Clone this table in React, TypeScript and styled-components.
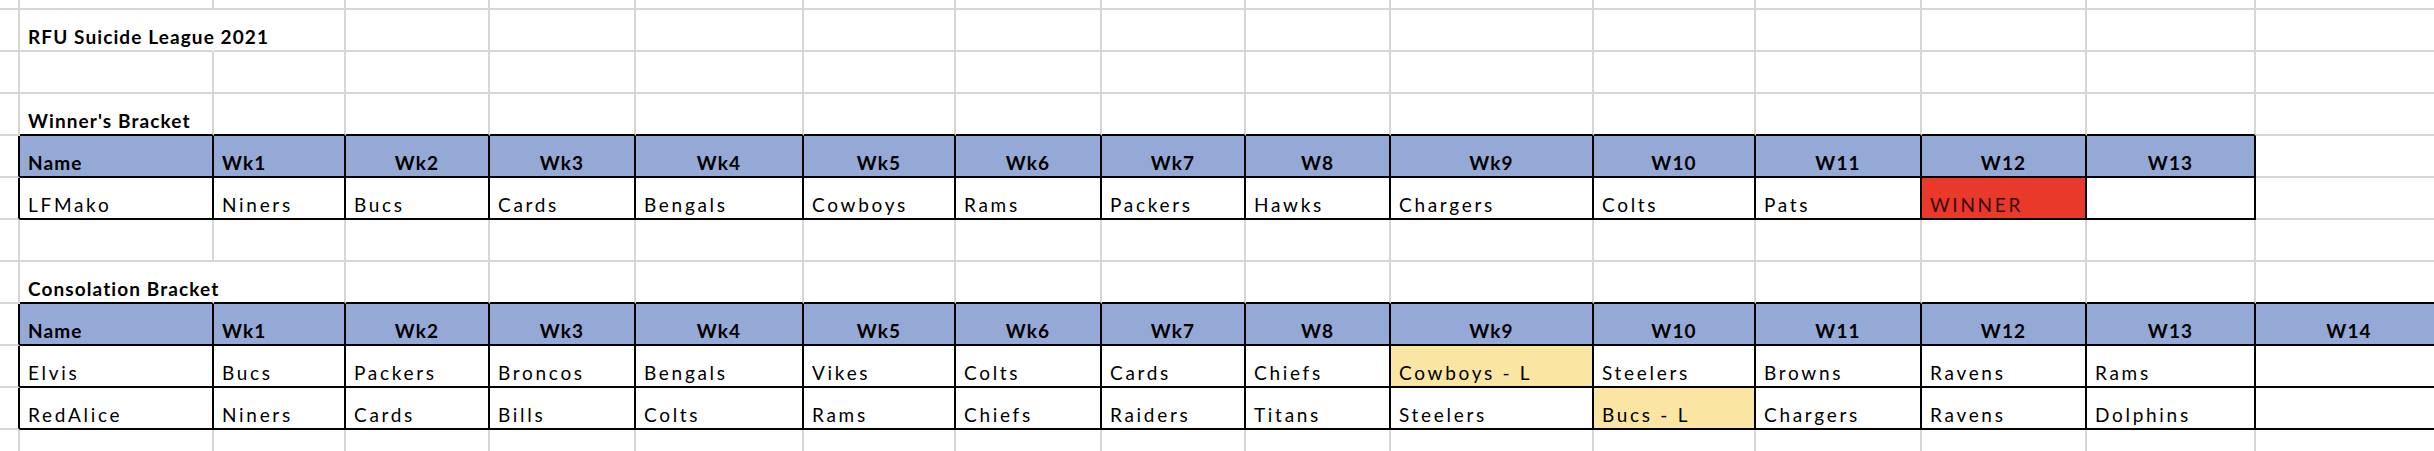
import React from "react";
import styled, { createGlobalStyle, css } from "styled-components";

const GRID_LINE = "#d6d6d6";
const INK_LINE = "#000000";
const HEAD_FILL = "#95a9d6";
const RED_FILL = "#e8392b";
const GOLD_FILL = "#fae5a3";

const COLS = [20, 194, 132, 144, 146, 168, 152, 146, 144, 145, 203, 162, 166, 165, 169, 188];
const ROWS = [10, 42, 42, 42, 42, 42, 42, 42, 42, 42, 42, 42];

type Fill = "head" | "red" | "gold" | "none";
type Align = "left" | "center";

interface CellSpec {
  text?: string;
  bold?: boolean;
  align?: Align;
  fill?: Fill;
  spill?: boolean;
  winner?: boolean;
}

const HEADERS = ["Name", "Wk1", "Wk2", "Wk3", "Wk4", "Wk5", "Wk6", "Wk7", "W8", "Wk9", "W10", "W11", "W12", "W13", "W14"];

const WINNERS: string[][] = [
  ["LFMako", "Niners", "Bucs", "Cards", "Bengals", "Cowboys", "Rams", "Packers", "Hawks", "Chargers", "Colts", "Pats", "WINNER", ""],
];

const CONSOLATION: string[][] = [
  ["Elvis", "Bucs", "Packers", "Broncos", "Bengals", "Vikes", "Colts", "Cards", "Chiefs", "Cowboys - L", "Steelers", "Browns", "Ravens", "Rams", ""],
  ["RedAlice", "Niners", "Cards", "Bills", "Colts", "Rams", "Chiefs", "Raiders", "Titans", "Steelers", "Bucs - L", "Chargers", "Ravens", "Dolphins", ""],
];

interface TableBlock {
  top: number; // header row index
  cols: number; // number of columns including Name
  rows: string[][];
}

const TABLES: TableBlock[] = [
  { top: 4, cols: 14, rows: WINNERS },
  { top: 8, cols: 15, rows: CONSOLATION },
];

const LOST = /- L$/;

function buildSheet(): CellSpec[][] {
  const sheet: CellSpec[][] = ROWS.map(() => COLS.map(() => ({})));
  sheet[1][1] = { text: "RFU Suicide League 2021", bold: true, spill: true };
  sheet[3][1] = { text: "Winner's Bracket", bold: true };
  sheet[7][1] = { text: "Consolation Bracket", bold: true, spill: true };

  TABLES.forEach((t) => {
    for (let c = 0; c < t.cols; c++) {
      sheet[t.top][c + 1] = {
        text: HEADERS[c],
        bold: true,
        align: c < 2 ? "left" : "center",
        fill: "head",
      };
    }
    t.rows.forEach((row, ri) => {
      for (let c = 0; c < t.cols; c++) {
        const text = row[c] ?? "";
        const winner = text === "WINNER";
        sheet[t.top + 1 + ri][c + 1] = {
          text,
          fill: winner ? "red" : LOST.test(text) ? "gold" : "none",
          winner,
        };
      }
    });
  });
  return sheet;
}

function inTable(r: number, c: number): boolean {
  return TABLES.some((t) => r >= t.top && r <= t.top + t.rows.length && c >= 1 && c <= t.cols);
}

const GlobalStyle = createGlobalStyle`
  html, body {
    margin: 0;
    padding: 0;
    background: #ffffff;
    overflow: hidden;
  }
  #root {
    width: 2434px;
    overflow: hidden;
  }
`;

const Sheet = styled.div`
  display: grid;
  grid-template-columns: ${COLS.map((w) => `${w}px`).join(" ")};
  grid-template-rows: ${ROWS.map((h) => `${h}px`).join(" ")};
  width: ${COLS.reduce((a, b) => a + b, 0)}px;
  font-family: Lato, "Open Sans", "Liberation Sans", sans-serif;
  color: #000;
`;

const fills: Record<Fill, string> = {
  head: HEAD_FILL,
  red: RED_FILL,
  gold: GOLD_FILL,
  none: "transparent",
};

const Cell = styled.div<{
  $right: "grid" | "ink" | "none";
  $bottom: "grid" | "ink";
  $fill: Fill;
  $bold: boolean;
  $align: Align;
  $winner: boolean;
}>`
  box-sizing: border-box;
  display: flex;
  align-items: flex-end;
  justify-content: ${(p) => (p.$align === "center" ? "center" : "flex-start")};
  min-width: 0;
  padding: 0 4px 2px 8px;
  white-space: nowrap;
  overflow: visible;
  background: ${(p) => fills[p.$fill]};
  border-right: 2px solid
    ${(p) => (p.$right === "ink" ? INK_LINE : p.$right === "grid" ? GRID_LINE : "transparent")};
  border-bottom: 2px solid ${(p) => (p.$bottom === "ink" ? INK_LINE : GRID_LINE)};
  font-size: 19px;
  line-height: 22px;
  ${(p) =>
    p.$bold
      ? css`
          font-weight: 700;
          letter-spacing: 1.1px;
        `
      : css`
          font-weight: 400;
          letter-spacing: 2.7px;
        `}
  ${(p) =>
    p.$align === "center" &&
    css`
      padding-left: 4px;
    `}
  ${(p) =>
    p.$winner &&
    css`
      color: #3b0906;
    `}
`;

const Label = styled.span`
  position: relative;
  z-index: 1;
`;

export default function App() {
  const sheet = buildSheet();
  return (
    <>
      <GlobalStyle />
      <Sheet>
        {sheet.map((row, r) =>
          row.map((cell, c) => {
            const right = cell.spill
              ? "none"
              : inTable(r, c) || inTable(r, c + 1)
              ? "ink"
              : "grid";
            const bottom = inTable(r, c) || inTable(r + 1, c) ? "ink" : "grid";
            return (
              <Cell
                key={`${r}-${c}`}
                $right={right}
                $bottom={bottom}
                $fill={cell.fill ?? "none"}
                $bold={!!cell.bold}
                $align={cell.align ?? "left"}
                $winner={!!cell.winner}
              >
                {cell.text ? <Label>{cell.text}</Label> : null}
              </Cell>
            );
          })
        )}
      </Sheet>
    </>
  );
}
